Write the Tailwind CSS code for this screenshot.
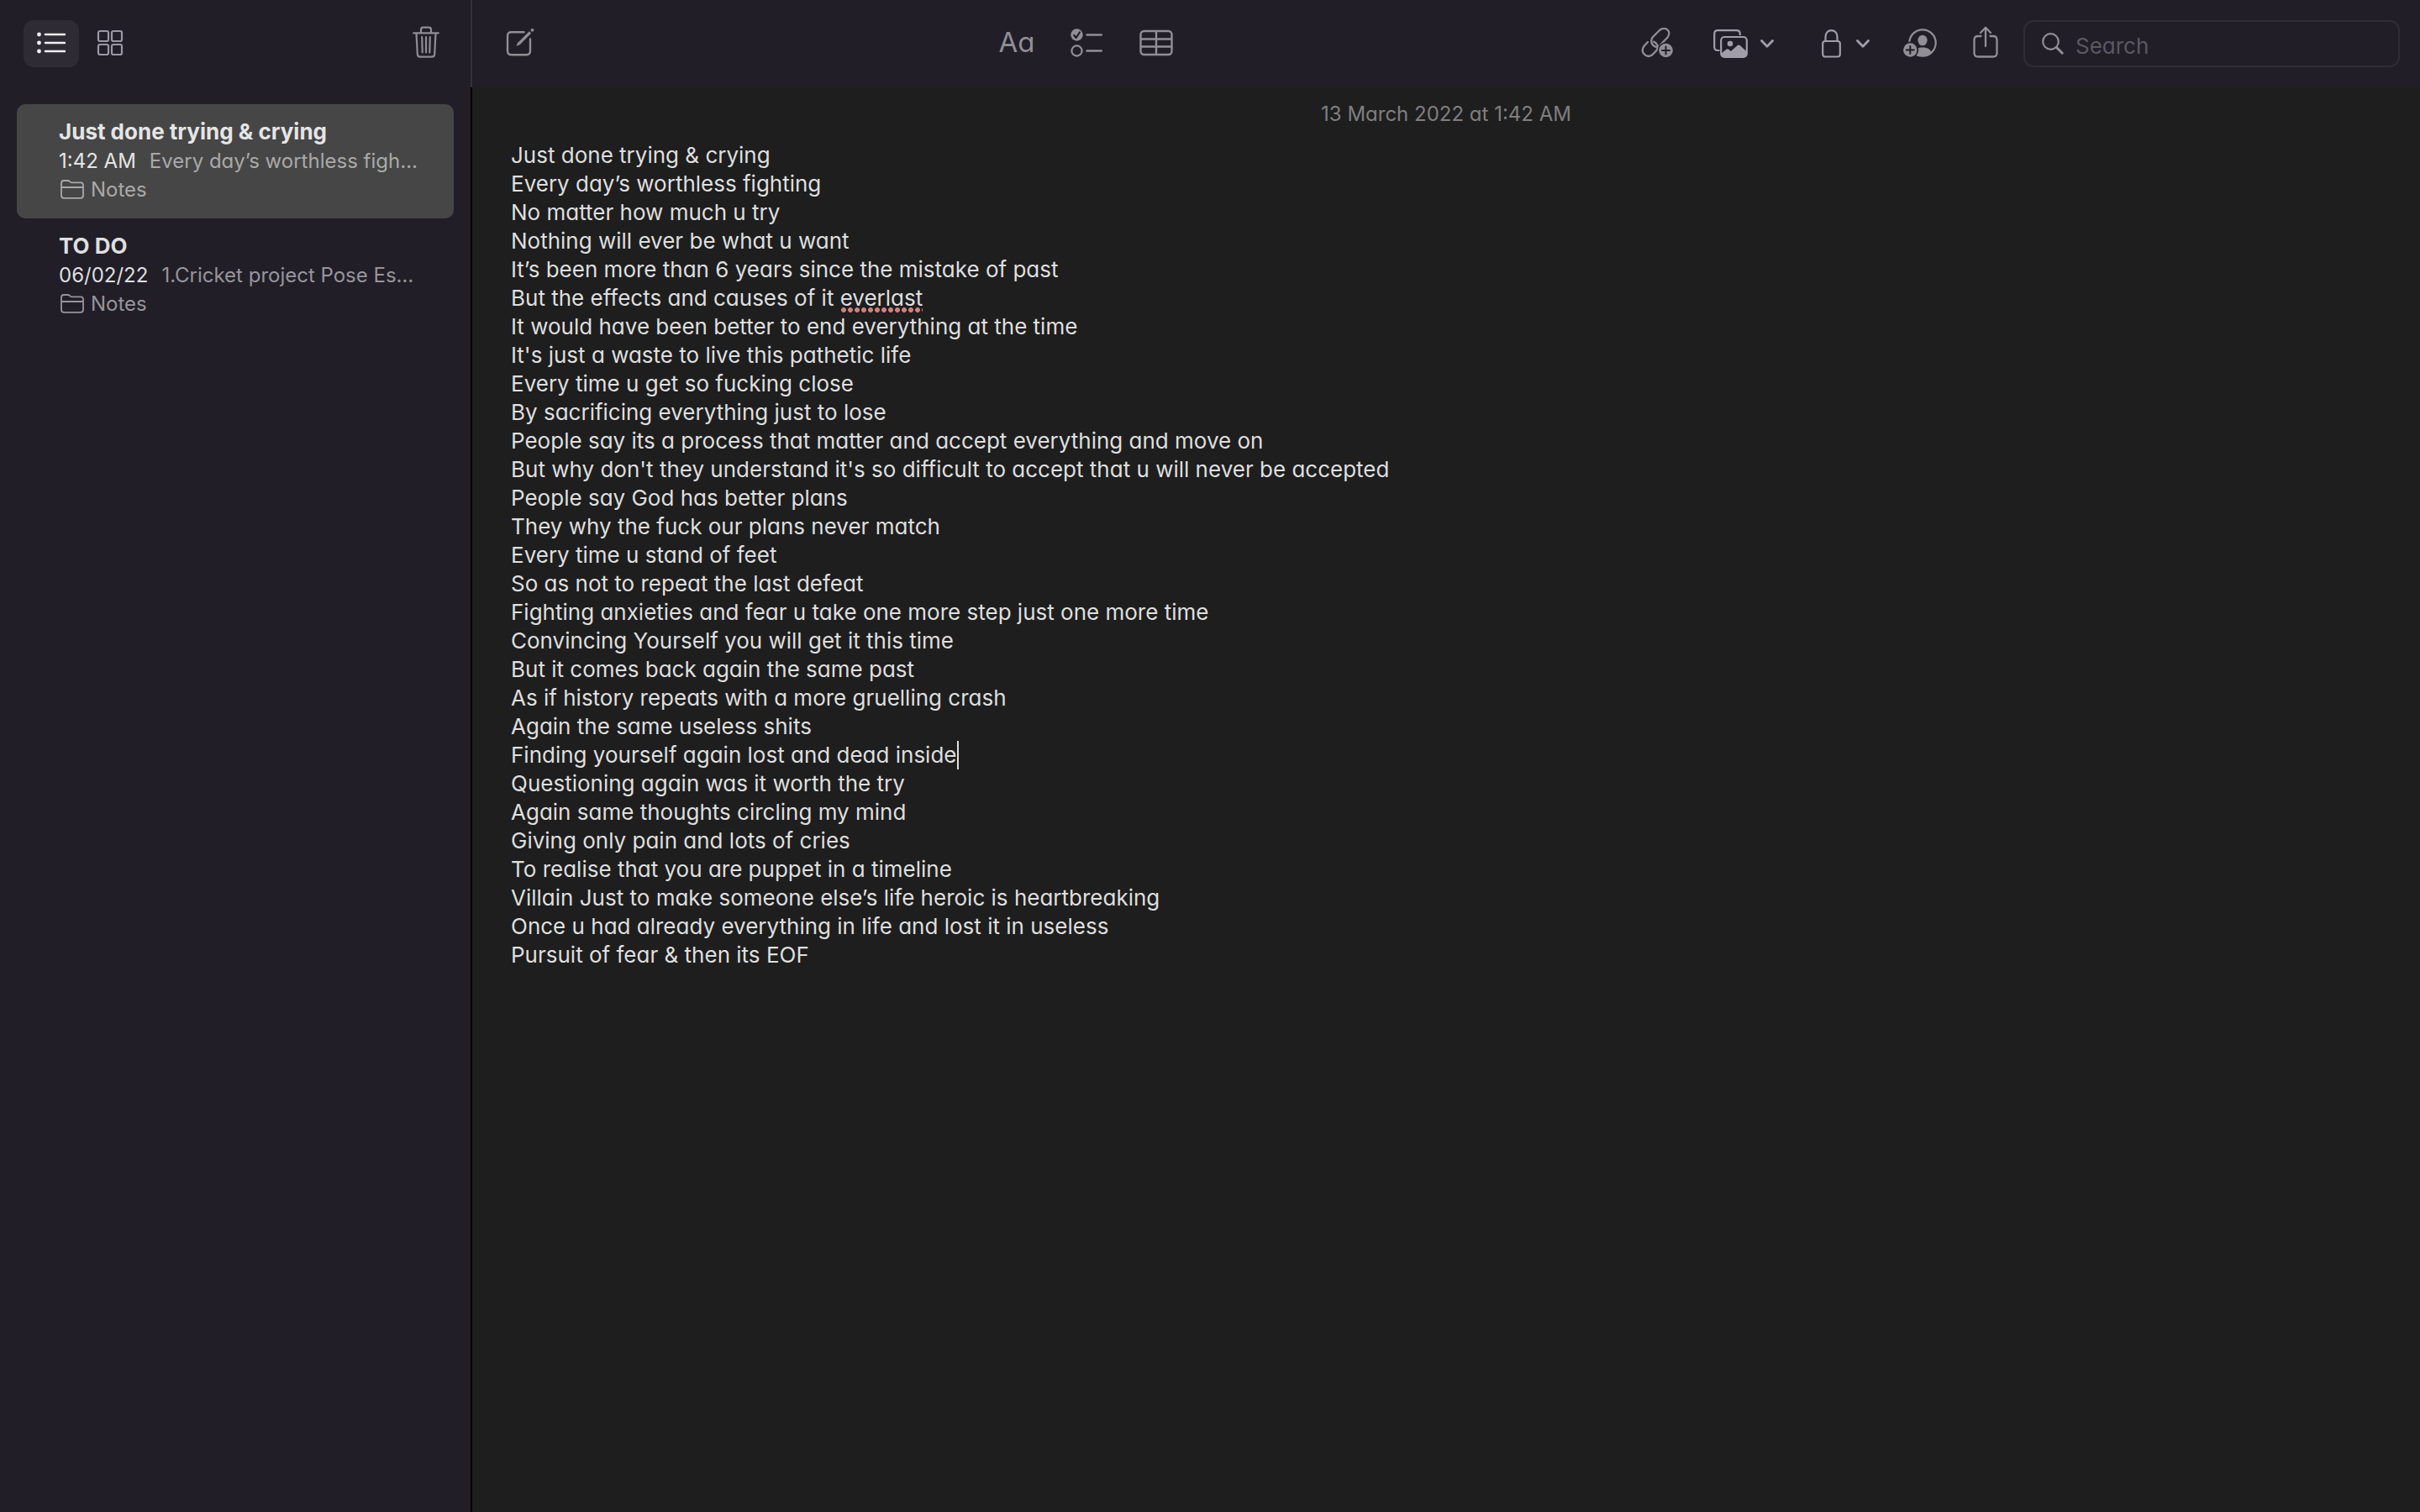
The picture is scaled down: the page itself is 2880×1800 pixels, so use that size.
<!DOCTYPE html>
<html lang="en">
<head>
<meta charset="utf-8">
<title>Notes</title>
<script src="https://cdn.jsdelivr.net/npm/@tailwindcss/browser@4"></script>
</head>
<body class="flex min-h-screen bg-[#1e1e1e] font-['Inter',sans-serif] text-[26px] leading-[34px] text-[#dfdfdf] [font-feature-settings:'cv11']">

<aside class="flex w-[562px] shrink-0 flex-col bg-[#211e28]">
  <div class="flex h-[104px] items-center gap-1 border-r-2 border-[#333235] pr-5 pl-7">
    <button aria-label="List view" class="flex h-14 w-[66px] items-center justify-center rounded-xl bg-[#2e2b35] text-[#f0eff1]">
      <svg class="-mt-0.5 h-[26px] w-[34px]" viewBox="0 0 34 26" fill="currentColor"><circle cx="2.500" cy="3" r="2.400"/><circle cx="2.500" cy="13" r="2.400"/><circle cx="2.500" cy="23" r="2.400"/><path d="M10 3h23M10 13h23M10 23h23" stroke="currentColor" stroke-width="2.600" stroke-linecap="round"/></svg>
    </button>
    <button aria-label="Gallery view" class="flex h-14 w-[66px] items-center justify-center text-[#9b97a3]">
      <svg class="-mt-0.5 h-8 w-8" viewBox="0 0 32 32" fill="none" stroke="currentColor" stroke-width="2.200"><rect x="2" y="2" width="12" height="12" rx="2"/><rect x="18" y="2" width="12" height="12" rx="2"/><rect x="2" y="18" width="12" height="12" rx="2"/><rect x="18" y="18" width="12" height="12" rx="2"/></svg>
    </button>
    <button aria-label="Delete" class="ml-auto flex h-14 w-[66px] items-center justify-center text-[#8f8c93]">
      <svg class="-mt-1 h-[38px] w-8" viewBox="0 0 32 38" fill="none" stroke="currentColor" stroke-width="2.200" stroke-linecap="round" stroke-linejoin="round"><path d="M1.200 8.300h29.600M10 8V4.200C10 2.600 11 1.600 12.600 1.600h6.800C21 1.600 22 2.600 22 4.200V8M4.500 8.500l1.300 25c.1 1.900 1.300 3.200 3.200 3.200h14c1.900 0 3.100-1.300 3.200-3.200l1.300-25M11.200 13l.5 18.500M16 13v18.500M20.800 13l-.5 18.500"/></svg>
    </button>
  </div>

  <nav aria-label="Notes list" class="grow border-r-2 border-black px-5 pt-5">
    <a href="#note-1" aria-current="page" class="block h-[136px] rounded-[10px] bg-[#464646] pt-4 pl-[50px] whitespace-nowrap">
      <div class="pb-px font-bold text-[#e5e5e5]">Just done trying &amp; crying</div>
      <div class="flex gap-4 text-[24px]"><span class="text-[#e5e5e5]">1:42 AM</span><span class="text-[#a9a9a9]">Every day’s worthless figh…</span></div>
      <div class="flex items-center gap-2 pl-0.5 text-[24px] text-[#a9a9a9]">
        <svg class="h-7 w-7" viewBox="0 0 28 28" fill="none" stroke="currentColor" stroke-width="1.800"><path d="M1 6c0-2 1-3 3-3h4.500c1 0 1.500.2 2.200.8l1 .8c.6.500 1.100.7 2 .7H24c2 0 3 1 3 3v12.500c0 2-1 3-3 3H4c-2 0-3-1-3-3zM1 11h26"/></svg>
        <span>Notes</span>
      </div>
    </a>
    <a href="#note-2" class="block h-[136px] pt-4 pl-[50px] whitespace-nowrap">
      <div class="pb-px font-bold">TO DO</div>
      <div class="flex gap-4 text-[24px]"><span>06/02/22</span><span class="text-[#97959a]">1.Cricket project Pose Es…</span></div>
      <div class="flex items-center gap-2 pl-0.5 text-[24px] text-[#97959a]">
        <svg class="h-7 w-7" viewBox="0 0 28 28" fill="none" stroke="currentColor" stroke-width="1.800"><path d="M1 6c0-2 1-3 3-3h4.500c1 0 1.500.2 2.200.8l1 .8c.6.500 1.100.7 2 .7H24c2 0 3 1 3 3v12.500c0 2-1 3-3 3H4c-2 0-3-1-3-3zM1 11h26"/></svg>
        <span>Notes</span>
      </div>
    </a>
  </nav>
</aside>

<div class="flex min-w-0 grow flex-col">
  <header class="flex h-[104px] items-center justify-between bg-[#211e28] px-6 text-[#918e95]">
    <button aria-label="New note" class="flex h-14 w-[66px] items-center justify-center">
      <svg class="-mt-1 h-[34px] w-[34px]" viewBox="0 0 34 34" fill="none" stroke="currentColor" stroke-width="2.400" stroke-linecap="round"><path d="M21.500 5.200H6.500C3.500 5.200 2 6.700 2 9.700v18c0 3 1.500 4.500 4.500 4.500h18c3 0 4.500-1.500 4.500-4.500V13.500"/><path d="M29 5.500L16 18.500" stroke-width="3.200" stroke-linecap="butt"/><path d="M12.400 22l2.200-5.200 3 3z" fill="currentColor" stroke="none"/><circle cx="31.500" cy="2.800" r="1.900" fill="currentColor" stroke="none"/></svg>
    </button>

    <div class="flex gap-[17px]">
      <button aria-label="Format" class="flex h-14 w-[66px] items-center justify-center pb-1 text-[33px] leading-10">Aa</button>
      <button aria-label="Checklist" class="flex h-14 w-[66px] items-center justify-center">
        <svg class="-mt-0.5 h-[34px] w-[38px]" viewBox="0 0 38 34" fill="none" stroke="currentColor" stroke-width="2.200" stroke-linecap="round"><circle cx="7.500" cy="7.500" r="7.200" fill="currentColor" stroke="none"/><path d="M4.200 8l2.500 3 4.200-6.500" stroke="#211e28" stroke-linejoin="round"/><circle cx="7.500" cy="26.500" r="6.100"/><path d="M19.500 7.500h17.300M19.500 26.500h17.300" stroke-width="2.500"/></svg>
      </button>
      <button aria-label="Table" class="flex h-14 w-[66px] items-center justify-center">
        <svg class="-mt-0.5 h-8 w-10" viewBox="0 0 40 32" fill="none" stroke="currentColor" stroke-width="2.400"><rect x="1.500" y="2" width="37" height="28" rx="4"/><path d="M1.500 11.500h37M1.500 20.500h37M20 2v28"/></svg>
      </button>
    </div>

    <div class="flex items-center">
      <button aria-label="Add link" class="flex h-14 w-[76px] items-center justify-center">
        <svg class="-mt-0.5 h-9 w-[38px]" viewBox="0 0 38 36" fill="none" stroke="currentColor" stroke-width="2.300" stroke-linecap="round"><path d="M8 17l-4.500 5c-5 7 2.500 15 9.500 10.500l5-5c2-2.500 2.200-6 .2-8.500-.9-1.200-2-2-3.200-2.300"/><path d="M22.500 21l9-9.500C37 4 28.500-2.500 22 3l-8 8c-3.500 4.500-1.500 10.500 4 12"/><circle cx="29.500" cy="27" r="9.800" fill="#211e28" stroke="none"/><circle cx="29.500" cy="27" r="8.300" fill="currentColor" stroke="none"/><path d="M29.500 22.500v9M25 27h9" stroke="#211e28" stroke-width="2"/></svg>
      </button>
      <button aria-label="Add media" class="flex h-14 w-[130px] items-center justify-center gap-[15px] text-[#a19da9]">
        <svg class="h-[34px] w-[41px]" viewBox="0 0 41 34" fill="none" stroke="currentColor" stroke-width="2.200"><path d="M7.500 25H5.500C2.500 25 1.200 23.700 1.200 20.700V5.500c0-3 1.300-4.300 4.300-4.300h22c3 0 4.300 1.300 4.300 4.300V7"/><rect x="9.200" y="9" width="30.600" height="23.800" rx="4"/><circle cx="20" cy="17" r="3.300" fill="currentColor" stroke="none"/><path d="M9.500 28.500l6-4.700c1-.8 1.800-.7 2.700 0l2.600 2.200 7.700-6.700c1.200-1 2.300-1 3.500 0l7.800 7.200V30c0 2-1 3-3 3H12.500c-2 0-3-1-3-3z" fill="currentColor" stroke="none"/></svg>
        <svg class="h-[10px] w-4" viewBox="0 0 16 10" fill="none" stroke="currentColor" stroke-width="2.800" stroke-linecap="round" stroke-linejoin="round"><path d="M1.500 1.500L8 8.200l6.500-6.700"/></svg>
      </button>
      <button aria-label="Lock note" class="flex h-14 w-[113px] items-center justify-center gap-[18px] text-[#a19da9]">
        <svg class="h-[34px] w-[23px]" viewBox="0 0 23 34" fill="none" stroke="currentColor" stroke-width="2.200"><rect x="1.200" y="14" width="20.600" height="18.500" rx="3"/><path d="M4.500 14V9c0-10.500 14-10.500 14 0v5"/></svg>
        <svg class="h-[10px] w-4" viewBox="0 0 16 10" fill="none" stroke="currentColor" stroke-width="2.800" stroke-linecap="round" stroke-linejoin="round"><path d="M1.500 1.500L8 8.200l6.500-6.700"/></svg>
      </button>
      <button aria-label="Add people" class="flex h-14 w-16 items-center justify-center">
        <svg class="-mt-0.5 h-[34px] w-10" viewBox="0 0 40 34" fill="none" stroke="currentColor" stroke-width="2.200"><circle cx="23" cy="17" r="15.700"/><ellipse cx="23" cy="14" rx="5.600" ry="6.300" fill="currentColor" stroke="none"/><path d="M12 28.500c2.500-4.500 6-6 11-6s8.500 1.500 11 6c-6 6-16 6-22 0z" fill="currentColor" stroke="none"/><circle cx="8.300" cy="25.500" r="9.900" fill="#211e28" stroke="none"/><circle cx="8.300" cy="25.500" r="8.200" fill="currentColor" stroke="none"/><path d="M8.300 21v9M3.800 25.500h9" stroke="#211e28" stroke-width="2" stroke-linecap="round"/></svg>
      </button>
      <button aria-label="Share" class="flex h-14 w-[91px] items-center justify-center">
        <svg class="-mt-1 h-[38px] w-[30px]" viewBox="0 0 30 38" fill="none" stroke="currentColor" stroke-width="2.300" stroke-linecap="round" stroke-linejoin="round"><path d="M9.500 12H6c-3 0-4.500 1.500-4.500 4.500V32c0 3 1.500 4.500 4.500 4.500h18c3 0 4.500-1.500 4.500-4.500V16.500c0-3-1.500-4.500-4.500-4.500h-3.500M15 24V2M9 8l6-6.200L21 8"/></svg>
      </button>
      <label class="flex h-14 w-[448px] items-center gap-[14px] rounded-xl border-2 border-[#302d37] pl-5">
        <svg class="h-[26px] w-[26px] shrink-0" viewBox="0 0 26 26" fill="none" stroke="currentColor" stroke-width="2.200" stroke-linecap="round"><circle cx="10.500" cy="10.500" r="9.300"/><path d="M17.300 17.300l6.900 6.900" stroke-width="3"/></svg>
        <input type="search" aria-label="Search" placeholder="Search" class="min-w-0 grow bg-transparent pt-1.5 outline-none placeholder:text-[#5b5860]">
      </label>
    </div>
  </header>

  <main class="px-[46px] pt-[15px]">
    <time datetime="2022-03-13T01:42" class="block text-center text-[24px] text-[#7f7f7f]">13 March 2022 at 1:42 AM</time>
    <article id="note-1" class="pt-[15px]">
      <p>Just done trying &amp; crying</p>
      <p>Every day’s worthless fighting</p>
      <p>No matter how much u try</p>
      <p>Nothing will ever be what u want</p>
      <p>It’s been more than 6 years since the mistake of past</p>
      <p>But the effects and causes of it <span class="relative">everlast<span class="absolute inset-x-0 -bottom-0.5 h-1.5 bg-[radial-gradient(circle,#d0807c_2.600px,transparent_3.200px)] bg-[length:8px_6px] bg-repeat-x"></span></span></p>
      <p>It would have been better to end everything at the time</p>
      <p>It's just a waste to live this pathetic life</p>
      <p>Every time u get so fucking close</p>
      <p>By sacrificing everything just to lose</p>
      <p>People say its a process that matter and accept everything and move on</p>
      <p>But why don't they understand it's so difficult to accept that u will never be accepted</p>
      <p>People say God has better plans</p>
      <p>They why the fuck our plans never match</p>
      <p>Every time u stand of feet</p>
      <p>So as not to repeat the last defeat</p>
      <p>Fighting anxieties and fear u take one more step just one more time</p>
      <p>Convincing Yourself you will get it this time</p>
      <p>But it comes back again the same past</p>
      <p>As if history repeats with a more gruelling crash</p>
      <p>Again the same useless shits</p>
      <p class="flex">Finding yourself again lost and dead inside<span class="w-0.5 bg-[#dfdfdf]"></span></p>
      <p>Questioning again was it worth the try</p>
      <p>Again same thoughts circling my mind</p>
      <p>Giving only pain and lots of cries</p>
      <p>To realise that you are puppet in a timeline</p>
      <p>Villain Just to make someone else’s life heroic is heartbreaking</p>
      <p>Once u had already everything in life and lost it in useless</p>
      <p>Pursuit of fear &amp; then its EOF</p>
    </article>
  </main>
</div>
</body>
</html>
